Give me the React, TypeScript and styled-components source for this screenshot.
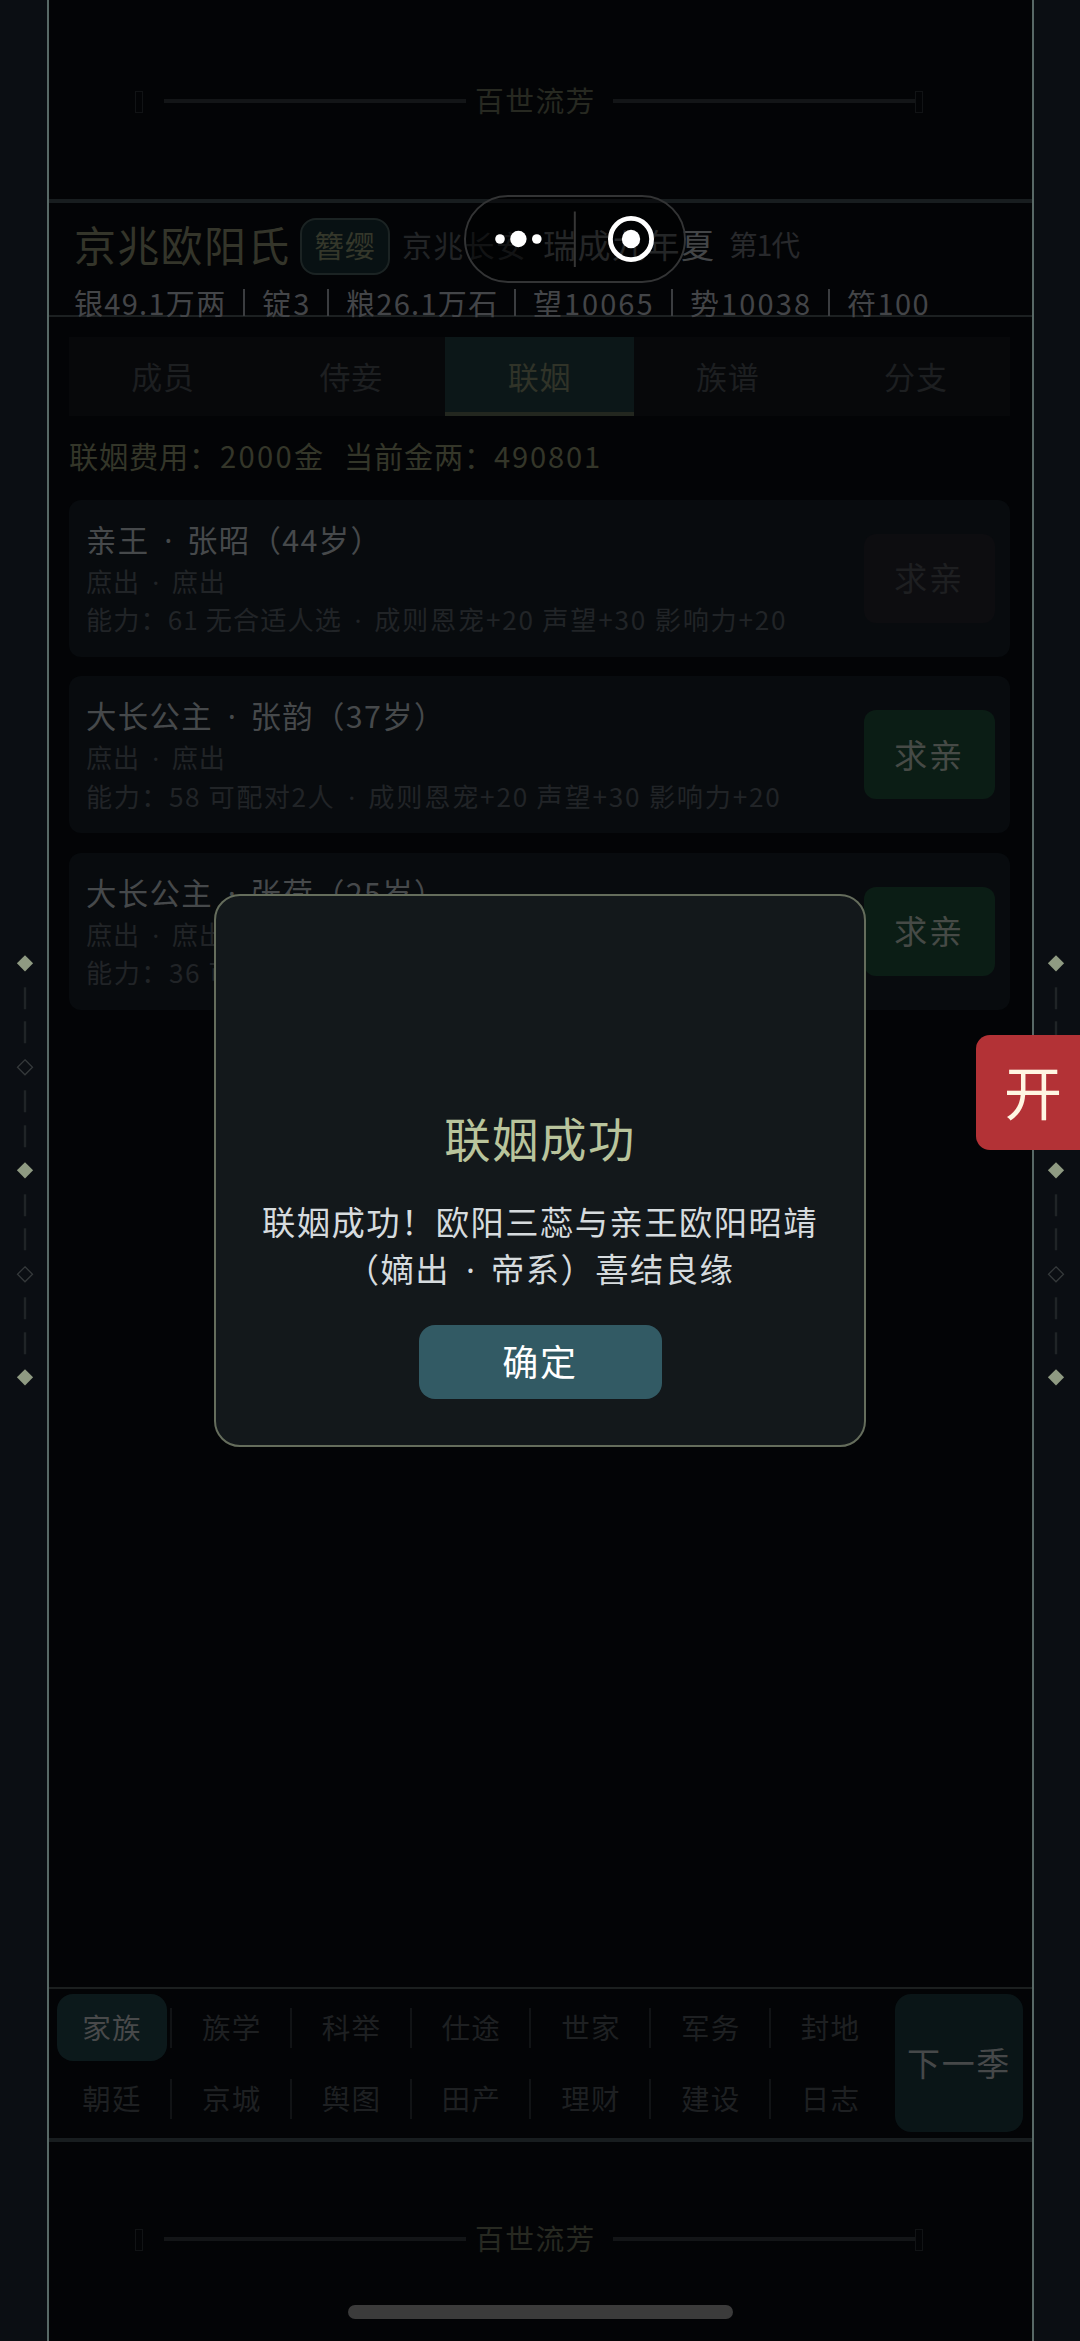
import React from "react";
import styled, { createGlobalStyle } from "styled-components";

const Global = createGlobalStyle`
  html, body { margin: 0; padding: 0; background: #030406; }
  * { box-sizing: border-box; }
  body {
    font-family: "Noto Sans CJK SC", "Noto Sans", sans-serif;
    font-weight: 400;
    letter-spacing: 0.8px;
    overflow: hidden;
  }
`;

const Screen = styled.div`
  position: relative;
  width: 1080px;
  height: 2341px;
  display: flex;
  background: #0b0e13;
  overflow: hidden;
`;

const Rail = styled.aside<{ $side: "left" | "right" }>`
  flex: 0 0 ${(p) => (p.$side === "left" ? 49 : 48.5)}px;
  display: flex;
  flex-direction: column;
  align-items: center;
  padding-top: 946px;
  ${(p) => (p.$side === "left" ? "border-right: 2px solid #586866; padding-left: 2px;" : "border-left: 2px solid #586866; padding-right: 2px;")}
`;

const Mark = styled.svg`
  display: block;
  flex: none;
  width: 18px;
  height: 34.53px;
`;

const Main = styled.main`
  flex: 1;
  min-width: 0;
  display: flex;
  flex-direction: column;
  background: #030406;
`;

const Banner = styled.div<{ $place: "top" | "bottom" }>`
  flex: none;
  display: flex;
  justify-content: flex-start;
  align-items: center;
  padding-left: 86px;
  ${(p) =>
    p.$place === "top"
      ? "height: 203px; padding-bottom: 0; border-bottom: 4px solid #181d1f; padding-top: 2px;"
      : "height: 203px; border-top: 4px solid #181d1f; padding-bottom: 6px;"}
`;

const Tofu = styled.span`
  flex: none;
  width: 8px;
  height: 22px;
  margin-top: 3px;
  border: 1px solid #111315;
`;

const Rule = styled.span<{ $gap?: number }>`
  flex: 0 0 302px;
  height: 4px;
  margin-left: ${(p) => p.$gap ?? 0}px;
  background: #131517;
`;

const Motto = styled.span`
  flex: 0 0 129px;
  margin: 0 0 1px 9px;
  font-size: 28.8px;
  letter-spacing: 1.4px;
  line-height: 40px;
  color: #272921;
`;

const Header = styled.header`
  flex: none;
  height: 114px;
  padding: 12px 0 0 25px;
  border-bottom: 2px solid #1c2021;
`;

const TitleRow = styled.div`
  display: flex;
  align-items: center;
  height: 62px;
  white-space: nowrap;
`;

const Clan = styled.span`
  width: 226px;
  padding-bottom: 5px;
  font-size: 42px;
  letter-spacing: 1.3px;
  line-height: 57px;
  color: #34352a;
`;

const Rank = styled.span`
  flex: none;
  width: 90px;
  height: 57px;
  border: 2px solid #1b2323;
  border-radius: 16px;
  background: #081113;
  color: #34372a;
  font-size: 30px;
  line-height: 48px;
  padding-left: 12px;
`;

const Place = styled.span`
  width: 141px;
  margin-left: 12px;
  padding-bottom: 5px;
  font-size: 30px;
  letter-spacing: 1.3px;
  color: #222426;
`;

const Year = styled.span`
  width: 186px;
  padding-bottom: 4px;
  font-size: 33px;
  letter-spacing: 1.5px;
  color: #434547;
`;

const Generation = styled.span`
  padding-bottom: 5px;
  font-size: 28.6px;
  letter-spacing: -1px;
  color: #28292c;
`;

const Stats = styled.div`
  display: flex;
  align-items: flex-start;
  white-space: nowrap;
  font-size: 29px;
  line-height: 34px;
  margin-top: 8px;
  color: #434548;
`;

const Stat = styled.span<{ $w: number; $track: number }>`
  flex: 0 0 ${(p) => p.$w}px;
  letter-spacing: ${(p) => p.$track}px;
`;

const Bar = styled.i`
  flex: 0 0 2px;
  height: 27px;
  margin: 4px 17px 0 0;
  background: #3b3d40;
`;

const Content = styled.section`
  flex: 1;
  padding: 20px 21.5px 0 20px;
`;

const Tabs = styled.nav`
  display: grid;
  grid-template-columns: repeat(5, 1fr);
  height: 79px;
  background: #07080a;
`;

const Tab = styled.div<{ $active: boolean }>`
  display: flex;
  align-items: center;
  justify-content: center;
  font-size: 31px;
  color: ${(p) => (p.$active ? "#303328" : "#1d1f21")};
  background: ${(p) => (p.$active ? "#0c1718" : "transparent")};
  border-bottom: 4px solid ${(p) => (p.$active ? "#23271f" : "transparent")};
  padding-top: 1px;
`;

const Fee = styled.p`
  display: flex;
  margin: 17px 0 22.6px;
  height: 44px;
  font-size: 29.2px;
  line-height: 44px;
  color: #343629;
  white-space: nowrap;
`;

const FeePart = styled.span<{ $w: number; $track?: number }>`
  flex: 0 0 ${(p) => p.$w}px;
  letter-spacing: ${(p) => p.$track ?? 0.8}px;
`;

const List = styled.div`
  display: flex;
  flex-direction: column;
  gap: 19.6px;
`;

const Card = styled.article`
  display: flex;
  align-items: center;
  justify-content: space-between;
  height: 157px;
  padding: 0 15.5px 0 17px;
  border-radius: 12px;
  background: #080b0e;
`;

const Info = styled.div`
  display: flex;
  flex-direction: column;
  padding-bottom: 2px;
  white-space: pre;
`;

const Name = styled.div`
  font-size: 30.4px;
  letter-spacing: 1.35px;
  line-height: 46px;
  color: #46494b;
`;

const Detail = styled.div`
  font-size: 26.2px;
  line-height: 38.5px;
  color: #212427;
`;

const Tracked = styled.span<{ $track: number }>`
  letter-spacing: ${(p) => p.$track}px;
`;

const MidDot = styled.span`
  display: inline-block;
  width: 0.7em;
  font-family: "Noto Sans", sans-serif;
  line-height: 1;
  text-align: center;
  letter-spacing: 0;
`;

const Propose = styled.button<{ $disabled: boolean }>`
  flex: none;
  width: 131px;
  height: 89px;
  padding: 0 0 3px;
  border: 0;
  border-radius: 12px;
  font: inherit;
  letter-spacing: 0.05em;
  font-size: 33.3px;
  background: ${(p) => (p.$disabled ? "#0d0d10" : "#0b1d15")};
  color: ${(p) => (p.$disabled ? "#1e1f21" : "#464a46")};
`;

const Dock = styled.footer`
  flex: none;
  display: flex;
  justify-content: space-between;
  height: 151px;
  padding: 5px 8.7px 0 8px;
  border-top: 2px solid #1b1f1f;
`;

const Menu = styled.div`
  display: grid;
  grid-template-columns: repeat(7, 119.75px);
  grid-template-rows: 67px 67px;
  row-gap: 4px;
`;

const MenuCell = styled.div`
  display: flex;
  align-items: center;
`;

const MenuItem = styled.span<{ $active: boolean }>`
  flex: 0 0 110px;
  height: 67px;
  border-radius: 16px;
  text-align: center;
  font-size: 28.6px;
  line-height: 65px;
  letter-spacing: 1.2px;
  color: ${(p) => (p.$active ? "#48494a" : "#1e2022")};
  background: ${(p) => (p.$active ? "#0c191b" : "transparent")};
`;

const Divider = styled.i`
  width: 2px;
  height: 40px;
  margin-left: 3px;
  background: #111315;
`;

const NextSeason = styled.button`
  width: 130px;
  height: 138px;
  padding: 0 0 2px;
  border: 0;
  border-radius: 16px;
  font: inherit;
  letter-spacing: 0.05em;
  font-size: 33px;
  white-space: nowrap;
  background: #0a1517;
  color: #464849;
`;

const Dialog = styled.div`
  position: absolute;
  left: 214px;
  top: 894px;
  width: 652px;
  height: 553px;
  display: flex;
  flex-direction: column;
  align-items: center;
  padding-top: 207px;
  border: 2px solid #656d5c;
  border-radius: 26px;
  background: #13181b;
`;

const DialogTitle = styled.h2`
  margin: 0;
  font-weight: 400;
  font-size: 46.4px;
  letter-spacing: 1.5px;
  line-height: 68px;
  color: #b9c49c;
`;

const DialogText = styled.p`
  margin: 27px 0 0;
  font-size: 33.3px;
  letter-spacing: 1.45px;
  line-height: 46.6px;
  text-align: center;
  white-space: pre;
  color: #d6dbde;
`;

const Confirm = styled.button`
  width: 243px;
  height: 74px;
  margin-top: 34px;
  padding: 0 0 4px;
  border: 0;
  border-radius: 16px;
  font: inherit;
  letter-spacing: 0.05em;
  font-size: 36px;
  color: #fff;
  background: #325a64;
`;

const Drawer = styled.div`
  position: absolute;
  right: 0;
  top: 1034.5px;
  width: 104px;
  height: 115px;
  padding-left: 28px;
  border-radius: 14px 0 0 14px;
  background: #b33236;
  color: #fff6e2;
  font-size: 58px;
  line-height: 111px;
  letter-spacing: 0;
`;

const Capsule = styled.div`
  position: absolute;
  left: 464px;
  top: 195px;
  width: 222px;
  height: 88px;
  border: 2px solid #333435;
  border-radius: 44px;
  background: rgba(0, 0, 0, 0.45);
`;

const CapsuleIcons = styled.svg`
  display: block;
  width: 218px;
  height: 84px;
`;

const HomeBar = styled.div`
  position: absolute;
  left: 348px;
  bottom: 22px;
  width: 385px;
  height: 14px;
  border-radius: 7px;
  background: #3b3b3b;
`;

const marks = Array.from({ length: 13 }, (_, i) => (i % 6 === 0 ? "solid" : i % 3 === 0 ? "hollow" : "bar"));

function RailMarks({ side }: { side: "left" | "right" }) {
  return (
    <Rail $side={side}>
      {marks.map((kind, i) => (
        <Mark key={i} viewBox="0 0 18 34.53">
          {kind === "bar" && <rect x="7.8" y="6.3" width="2.4" height="22" fill="#202427" />}
          {kind === "solid" && <path d="M9 9.2 17.1 17.3 9 25.4 .9 17.3Z" fill="#8f9a82" />}
          {kind === "hollow" && <path d="M9 9.8 16.5 17.3 9 24.8 1.5 17.3Z" fill="none" stroke="#35393b" strokeWidth="1.3" />}
        </Mark>
      ))}
    </Rail>
  );
}

function MottoBanner({ place }: { place: "top" | "bottom" }) {
  return (
    <Banner $place={place}>
      <Tofu />
      <Rule $gap={21} />
      <Motto>百世流芳</Motto>
      <Rule $gap={9} />
      <Tofu />
    </Banner>
  );
}

/** Sets each middle dot narrower than a full-width glyph. */
function Dotted({ text }: { text: string }) {
  return (
    <>
      {text.split("·").map((part, i) => (
        <React.Fragment key={i}>
          {i > 0 && <MidDot>·</MidDot>}
          {part}
        </React.Fragment>
      ))}
    </>
  );
}

const tabs = ["成员", "侍妾", "联姻", "族谱", "分支"];

const stats: [string, number, number][] = [
  ["银49.1万两", 169, 1.3],
  ["锭3", 65, 2.2],
  ["粮26.1万石", 168, 1.3],
  ["望10065", 138, 2],
  ["势10038", 138, 2.1],
  ["符100", 90, 1.4],
];

const reward = "成则恩宠+20 声望+30 影响力+20";

const people = [
  { name: "亲王 · 张昭（44岁）", detail: "能力：61 无合适人选 · ", track: 1.05, disabled: true },
  { name: "大长公主 · 张韵（37岁）", detail: "能力：58 可配对2人 · ", track: 1.5, disabled: false },
  { name: "大长公主 · 张荷（25岁）", detail: "能力：36 可配对2人 · ", track: 1.5, disabled: false },
];

const menu = [
  "家族", "族学", "科举", "仕途", "世家", "军务", "封地",
  "朝廷", "京城", "舆图", "田产", "理财", "建设", "日志",
];

export default function App() {
  return (
    <Screen>
      <Global />
      <RailMarks side="left" />
      <Main>
        <MottoBanner place="top" />
        <Header>
          <TitleRow>
            <Clan>京兆欧阳氏</Clan>
            <Rank>簪缨</Rank>
            <Place>京兆长安</Place>
            <Year>瑞成九年夏</Year>
            <Generation>第1代</Generation>
          </TitleRow>
          <Stats>
            {stats.map(([text, w, track], i) => (
              <React.Fragment key={text}>
                {i > 0 && <Bar />}
                <Stat $w={w} $track={track}>{text}</Stat>
              </React.Fragment>
            ))}
          </Stats>
        </Header>
        <Content>
          <Tabs>
            {tabs.map((t) => (
              <Tab key={t} $active={t === "联姻"}>{t}</Tab>
            ))}
          </Tabs>
          <Fee>
            <FeePart $w={151}>联姻费用：</FeePart>
            <FeePart $w={124} $track={2.3}>2000金</FeePart>
            <FeePart $w={150}>当前金两：</FeePart>
            <FeePart $w={120} $track={1.8}>490801</FeePart>
          </Fee>
          <List>
            {people.map((p) => (
              <Card key={p.name}>
                <Info>
                  <Name><Dotted text={p.name} /></Name>
                  <Detail><Dotted text="庶出 · 庶出" /></Detail>
                  <Detail>
                    <Tracked $track={p.track}><Dotted text={p.detail} /></Tracked>
                    <Tracked $track={1.75}>{reward}</Tracked>
                  </Detail>
                </Info>
                <Propose $disabled={p.disabled}>求亲</Propose>
              </Card>
            ))}
          </List>
        </Content>
        <Dock>
          <Menu>
            {menu.map((m, i) => (
              <MenuCell key={m}>
                <MenuItem $active={i === 0}>{m}</MenuItem>
                {i % 7 !== 6 && <Divider />}
              </MenuCell>
            ))}
          </Menu>
          <NextSeason>下一季</NextSeason>
        </Dock>
        <MottoBanner place="bottom" />
      </Main>
      <RailMarks side="right" />
      <Dialog>
        <DialogTitle>联姻成功</DialogTitle>
        <DialogText><Dotted text={"联姻成功！欧阳三蕊与亲王欧阳昭靖\n（嫡出 · 帝系）喜结良缘"} /></DialogText>
        <Confirm>确定</Confirm>
      </Dialog>
      <Drawer>开</Drawer>
      <Capsule>
        <CapsuleIcons viewBox="466 197 218 84">
          <g fill="#fff">
            <circle cx="500" cy="239" r="4.8" />
            <circle cx="518.4" cy="239" r="8.2" />
            <circle cx="536.8" cy="239" r="4.8" />
            <circle cx="631" cy="239" r="9.2" />
          </g>
          <rect x="573.8" y="211.5" width="2" height="55.5" fill="#363636" />
          <circle cx="631" cy="239" r="20.6" fill="none" stroke="#fff" strokeWidth="4.8" />
        </CapsuleIcons>
      </Capsule>
      <HomeBar />
    </Screen>
  );
}
